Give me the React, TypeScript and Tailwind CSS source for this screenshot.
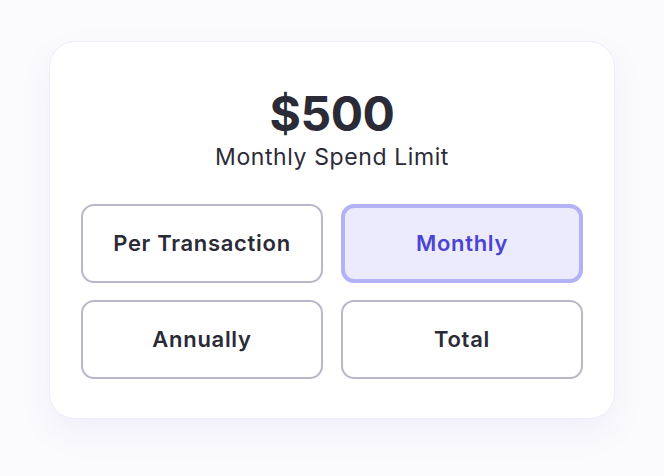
import React, { useState } from 'react'

const options = ['Per Transaction', 'Monthly', 'Annually', 'Total']

export default function App() {
  const [selected, setSelected] = useState('Monthly')

  return (
    <div
      className="flex h-[476px] w-[664px] items-start justify-center bg-[#fbfbfd] pt-[41px]"
      style={{ fontFamily: 'Inter, "Noto Sans", sans-serif' }}
    >
      <div className="flex h-[378px] w-[566px] flex-col rounded-[26px] border border-[#f0ecfb] bg-white px-[31px] pt-[44px] shadow-[0_14px_32px_rgba(110,100,200,0.08)]">
        <div className="flex flex-col items-center">
          <h1 className="text-[48px] font-bold leading-[56px] tracking-[-0.5px] text-[#2b2b38]">$500</h1>
          <p className="mt-[2px] text-[23px] leading-[26px] tracking-[0.6px] text-[#2b2b38]">Monthly Spend Limit</p>
        </div>
        <div className="mt-[34px] grid grid-cols-2 gap-x-[18px] gap-y-[17px]">
          {options.map((opt) =>
            opt === selected ? (
              <button
                key={opt}
                onClick={() => setSelected(opt)}
                className="flex h-[79px] items-center justify-center rounded-[13px] border-[4px] border-[#b4b2f6] bg-[#ebebfd] text-[22px] font-semibold tracking-[0.7px] text-[#4a44d4]"
              >
                {opt}
              </button>
            ) : (
              <button
                key={opt}
                onClick={() => setSelected(opt)}
                className="flex h-[79px] items-center justify-center rounded-[13px] border-2 border-[#bab8c8] bg-white text-[22px] font-semibold tracking-[0.7px] text-[#2b2b38]"
              >
                {opt}
              </button>
            )
          )}
        </div>
      </div>
    </div>
  )
}
